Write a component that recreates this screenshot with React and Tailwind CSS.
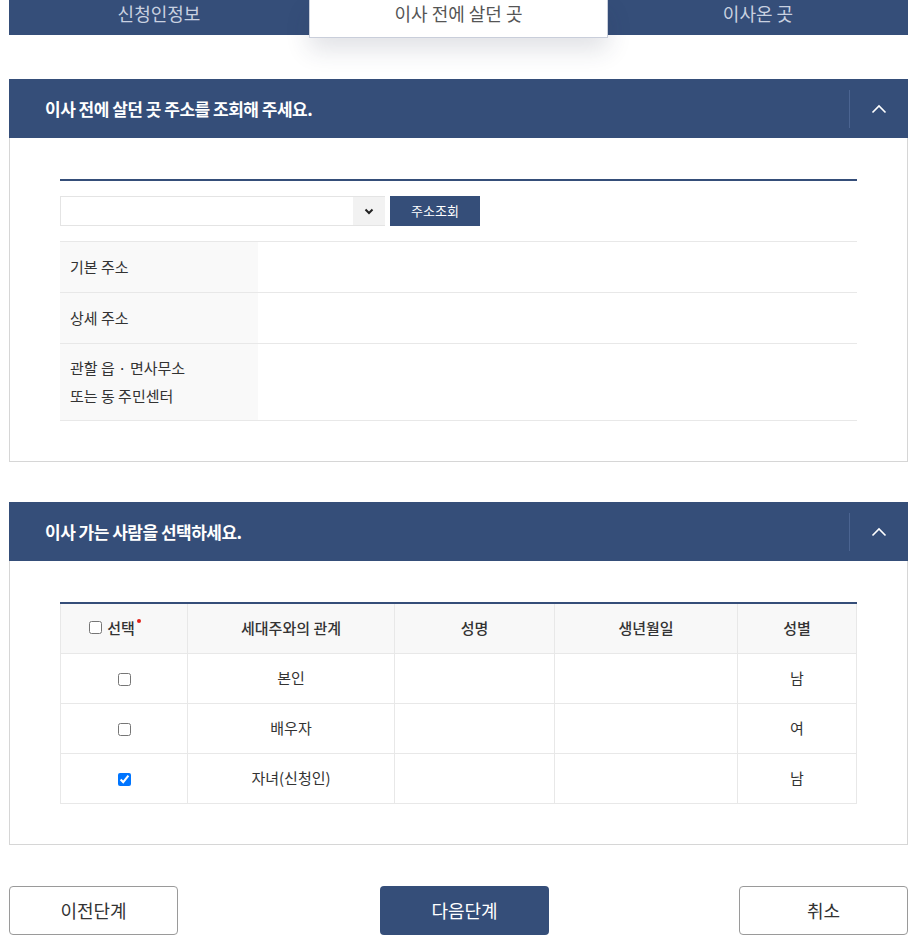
import React from "react";

const NAVY = "bg-[#354e79]";

const Chevron = () => (
  <svg width="16" height="10" viewBox="0 0 16 10" fill="none">
    <polyline points="1.5,8.5 8,2 14.5,8.5" stroke="#ffffff" strokeWidth="1.6" />
  </svg>
);

const SectionHeader = ({ title }) => (
  <div className={`flex items-center h-[59px] ${NAVY}`}>
    <h2 className="flex-1 pl-[36px] text-[17px] font-bold text-white tracking-[-0.03em]">
      {title}
    </h2>
    <div className="flex items-center justify-center w-[59px] h-[38px] border-l border-[#4b6491]">
      <Chevron />
    </div>
  </div>
);

const people = [
  { rel: "본인", sex: "남", checked: false },
  { rel: "배우자", sex: "여", checked: false },
  { rel: "자녀(신청인)", sex: "남", checked: true },
];

const App = () => {
  return (
    <div
      className="w-[917px] min-h-[940px] bg-white px-[9px] text-[#333]"
      style={{ fontFamily: '"Noto Sans CJK KR", "Noto Sans", sans-serif' }}
    >
      {/* step tabs */}
      <div className={`flex items-start h-[35px] ${NAVY}`}>
        <div className="flex-1 h-[35px] pt-[3px] text-center text-[18px] leading-[20px] text-[#c9d1e0]">
          신청인정보
        </div>
        <div className="relative z-10 w-[299px] h-[38px] pt-[3px] bg-white border border-t-0 border-[#c9ceda] shadow-[0_12px_24px_rgba(40,50,80,0.14)] text-center text-[18px] leading-[20px] text-[#555]">
          이사 전에 살던 곳
        </div>
        <div className="flex-1 h-[35px] pt-[3px] text-center text-[18px] leading-[20px] text-[#c9d1e0]">
          이사온 곳
        </div>
      </div>

      {/* section 1 */}
      <section className="mt-[44px]">
        <SectionHeader title="이사 전에 살던 곳 주소를 조회해 주세요." />
        <div className="border border-t-0 border-[#d6d6d6] px-[50px] pt-[41px] pb-[40px]">
          <div className="border-t-2 border-[#354e79]">
            <div className="flex items-center gap-[5px] py-[15px]">
              <div className="flex w-[325px] h-[30px] border border-[#e4e4e4] border-r-0">
                <div className="flex-1 bg-white" />
                <div className="w-[32px] bg-[#f2f2f2] flex items-center justify-center">
                  <svg width="10" height="7" viewBox="0 0 10 7" fill="none">
                    <polyline points="1.5,1.5 5,5 8.5,1.5" stroke="#222" strokeWidth="2" />
                  </svg>
                </div>
              </div>
              <button className={`w-[90px] h-[30px] ${NAVY} text-white text-[13px]`}>
                주소조회
              </button>
            </div>
            <div className="flex h-[51px] border-t border-[#e8e8e8]">
              <div className="w-[198px] bg-[#f9f9f9] pl-[10px] flex items-center text-[15px]">
                기본 주소
              </div>
              <div className="flex-1" />
            </div>
            <div className="flex h-[51px] border-t border-[#e8e8e8]">
              <div className="w-[198px] bg-[#f9f9f9] pl-[10px] flex items-center text-[15px]">
                상세 주소
              </div>
              <div className="flex-1" />
            </div>
            <div className="flex h-[78px] border-y border-[#e8e8e8]">
              <div className="w-[198px] bg-[#f9f9f9] pl-[10px] flex flex-col justify-center text-[15px] leading-[28px]">
                <span>관할 읍 · 면사무소</span>
                <span>또는 동 주민센터</span>
              </div>
              <div className="flex-1" />
            </div>
          </div>
        </div>
      </section>

      {/* section 2 */}
      <section className="mt-[40px]">
        <SectionHeader title="이사 가는 사람을 선택하세요." />
        <div className="border border-t-0 border-[#d6d6d6] px-[50px] pt-[41px] pb-[40px]">
          <table className="w-full border-collapse border-t-2 border-[#354e79] text-[15px] text-center">
            <thead>
              <tr className="h-[50px] bg-[#f8f8f8]">
                <th className="w-[127px] pr-[24px] font-medium border-x border-[#e8e8e8]">
                  <span className="inline-flex items-center gap-[5px]">
                    <input type="checkbox" className="w-[13px] h-[13px]" readOnly />
                    <span className="relative">
                      선택
                      <span className="absolute -right-[6px] top-[2px] w-[4px] h-[4px] rounded-full bg-[#e0231c]" />
                    </span>
                  </span>
                </th>
                <th className="w-[207px] font-medium border-x border-[#e8e8e8]">세대주와의 관계</th>
                <th className="w-[160px] font-medium border-x border-[#e8e8e8]">성명</th>
                <th className="w-[183px] font-medium border-x border-[#e8e8e8]">생년월일</th>
                <th className="font-medium border-x border-[#e8e8e8]">성별</th>
              </tr>
            </thead>
            <tbody>
              {people.map((p) => (
                <tr key={p.rel} className="h-[50px]">
                  <td className="border border-[#e8e8e8]">
                    <input
                      type="checkbox"
                      defaultChecked={p.checked}
                      className="w-[13px] h-[13px] align-middle"
                    />
                  </td>
                  <td className="border border-[#e8e8e8]">{p.rel}</td>
                  <td className="border border-[#e8e8e8]" />
                  <td className="border border-[#e8e8e8]" />
                  <td className="border border-[#e8e8e8]">{p.sex}</td>
                </tr>
              ))}
            </tbody>
          </table>
        </div>
      </section>

      {/* bottom buttons */}
      <div className="flex mt-[41px]">
        <button className="shrink-0 w-[169px] h-[49px] border border-[#9a9a9a] rounded-[4px] bg-white text-[18px] text-[#333]">
          이전단계
        </button>
        <button className={`shrink-0 ml-[202px] w-[169px] h-[49px] rounded-[4px] ${NAVY} text-[18px] text-white`}>
          다음단계
        </button>
        <button className="shrink-0 ml-auto w-[169px] h-[49px] border border-[#9a9a9a] rounded-[4px] bg-white text-[18px] text-[#333]">
          취소
        </button>
      </div>
    </div>
  );
};

export default App;
